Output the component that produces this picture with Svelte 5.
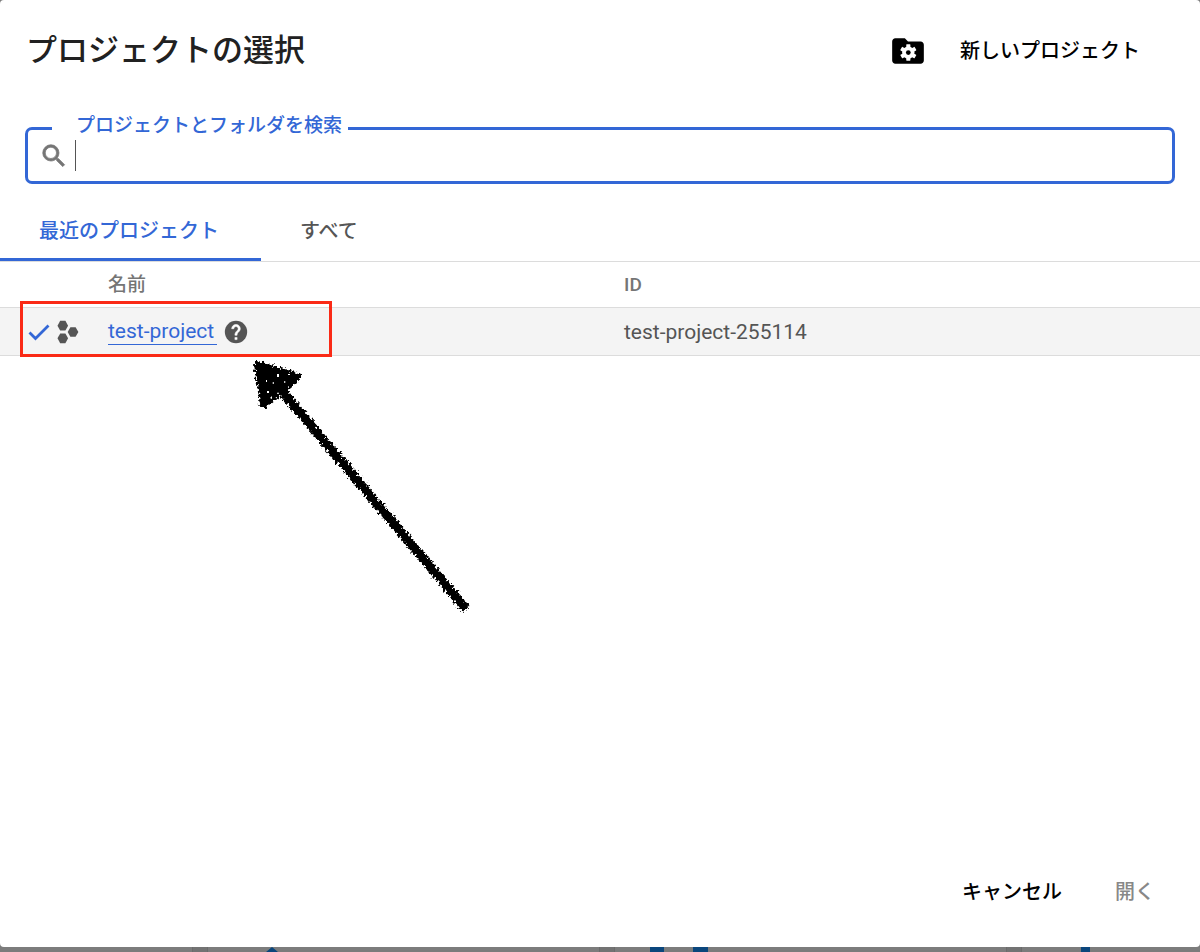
<script lang="ts">
  interface Project {
    name: string;
    id: string;
  }

  const tabs = [
    { key: 'recent', label: '最近のプロジェクト' },
    { key: 'all', label: 'すべて' }
  ];

  const projects: Project[] = [{ name: 'test-project', id: 'test-project-255114' }];

  let activeTab = $state('recent');
  let query = $state('');
  let selectedId = $state('test-project-255114');

  const visible = $derived(projects.filter((p) => p.name.includes(query)));
</script>

<div class="page">
  <div class="dialog" role="dialog" aria-labelledby="dialog-title">
    <header class="header">
      <h1 id="dialog-title">プロジェクトの選択</h1>
      <button type="button" class="new-project">
        <svg width="38" height="38" viewBox="0 0 24 24" aria-hidden="true">
          <path
            fill="#000"
            d="M10 4H4C2.900 4 2 4.900 2 6v12c0 1.100.9 2 2 2h16c1.100 0 2-.9 2-2V8c0-1.100-.9-2-2-2h-8z"
          />
          <g transform="translate(12.2 13)" fill="#fff">
            <circle r="3.900" />
            {#each [0, 60, 120] as angle}
              <rect x="-1.300" y="-5.200" width="2.600" height="10.400" rx=".3" transform="rotate({angle})" />
            {/each}
            <circle r="1.500" fill="#000" />
          </g>
        </svg>
        <span>新しいプロジェクト</span>
      </button>
    </header>

    <!-- Search -->
    <fieldset class="search">
      <legend><label for="search">プロジェクトとフォルダを検索</label></legend>
      <div class="search-row">
        <svg width="30" height="30" viewBox="0 0 24 24" aria-hidden="true">
          <path
            fill="#757575"
            stroke="#757575"
            stroke-width=".6"
            d="M15.500 14h-.79l-.28-.27A6.471 6.471 0 0 0 16 9.500 6.500 6.500 0 1 0 9.500 16c1.610 0 3.090-.59 4.230-1.570l.27.28v.79l5 4.990L20.490 19l-4.990-5zm-6 0C7.010 14 5 11.990 5 9.500S7.010 5 9.500 5 14 7.010 14 9.500 11.990 14 9.500 14z"
          />
        </svg>
        <span class="caret"></span>
        <input id="search" type="text" bind:value={query} />
      </div>
    </fieldset>

    <!-- Tabs -->
    <div class="tabs" role="tablist">
      {#each tabs as tab}
        <button
          type="button"
          role="tab"
          class="tab"
          class:active={activeTab === tab.key}
          aria-selected={activeTab === tab.key}
          onclick={() => (activeTab = tab.key)}
        >
          {tab.label}
        </button>
      {/each}
    </div>

    <div class="list">
      <table>
        <thead>
          <tr>
            <th class="col-icon"></th>
            <th class="col-name">名前</th>
            <th>ID</th>
          </tr>
        </thead>
        <tbody>
          {#each visible as project}
            <tr class:selected={project.id === selectedId}>
              <td class="col-icon">
                <div class="icons">
                  <svg width="22" height="18" viewBox="0 0 22 18" aria-hidden="true">
                    <path d="M1.500 9.500 7.500 15.500 20.500 2.500" fill="none" stroke="#3367d6" stroke-width="2.800" />
                  </svg>
                  <svg width="22" height="24" viewBox="0 0 22 24" fill="#555" aria-hidden="true">
                    <path d="M3.200.8h5.200L11.100 5.800 8.400 10.500H3.200L.5 5.800z" />
                    <path d="M13.400 7.300h5.200L21.400 12l-2.800 4.700h-5.200L10.700 12z" />
                    <path d="M3.200 13.500h5.200l2.700 4.700-2.700 5H3.200l-2.700-5z" />
                  </svg>
                </div>
              </td>
              <td class="col-name">
                <div class="name">
                  <a href="#{project.id}" onclick={() => (selectedId = project.id)}>{project.name}</a>
                  <svg width="26" height="26" viewBox="0 0 24 24" aria-hidden="true">
                    <circle cx="12" cy="12" r="10.300" fill="#555" />
                    <path
                      fill="#fff"
                      stroke="#fff"
                      stroke-width=".5"
                      d="M13 19h-2v-2h2v2zm2.070-7.750-.9.920C13.450 12.900 13 13.500 13 15h-2v-.5c0-1.100.45-2.100 1.170-2.830l1.240-1.260c.37-.36.59-.86.59-1.410 0-1.100-.9-2-2-2s-2 .9-2 2H8c0-2.210 1.790-4 4-4s4 1.790 4 4c0 .88-.36 1.680-.93 2.250z"
                    />
                  </svg>
                </div>
              </td>
              <td>{project.id}</td>
            </tr>
          {/each}
        </tbody>
      </table>

      <!-- Callout drawn over the selected row -->
      <div class="callout"></div>
      <svg class="arrow" width="240" height="270" viewBox="0 0 240 270" aria-hidden="true">
        <defs>
          <filter id="rough" filterUnits="userSpaceOnUse" x="0" y="0" width="240" height="270">
            <feTurbulence type="fractalNoise" baseFrequency=".4" numOctaves="2" seed="4" result="noise" />
            <feDisplacementMap in="SourceGraphic" in2="noise" scale="8" xChannelSelector="R" yChannelSelector="G" />
          </filter>
        </defs>
        <g filter="url(#rough)" stroke="#000" stroke-linejoin="round">
          <path d="M18 15 57 27 24 54z" stroke-width="8" />
          <path d="M36 34 226 259" fill="none" stroke-width="9" />
        </g>
        <path
          fill="#fff"
          d="M37 24h2v3h-2zM32 33l2-1v2zM44 31l2 1-2 1zM27 41h2v2h-2zM48 24h2v1h-2zM30 48l2-2v3zM38 42l1 2h-2zM26 30h1v2h-1z"
        />
      </svg>
    </div>

    <footer class="actions">
      <button type="button">キャンセル</button>
      <button type="button" disabled>開く</button>
    </footer>
  </div>

  <!-- Dimmed dashboard cards behind the dialog -->
  <svg class="backdrop" viewBox="0 0 1200 5" preserveAspectRatio="none" aria-hidden="true">
    <path fill="#7c7c7c" d="M0 0h1200v5H0z" />
    <path fill="#737373" d="M192 0h16v5h-16zM599 0h16v5h-16zM1006 0h16v5h-16z" />
    <path fill="#6b6b6b" d="M192 0h1v5h-1zM207 0h1v5h-1zM599 0h1v5h-1zM614 0h1v5h-1zM1006 0h1v5h-1zM1021 0h1v5h-1z" />
    <path fill="#0b467c" d="M272 0l6 5h-12zM650 0h14v5h-14zM693 0h15v5h-15zM1081 0h9v5h-9z" />
  </svg>
</div>

<style>
  :global(body) {
    margin: 0;
    background: #7c7c7c;
  }

  .page {
    display: flex;
    flex-direction: column;
    min-height: 100vh;
    font-family: Roboto, 'Noto Sans CJK JP', sans-serif;
    font-size: 21px;
    color: #555;
  }

  .dialog {
    flex: 1;
    display: flex;
    flex-direction: column;
    background: #fff;
    border-radius: 4px;
  }

  .backdrop {
    display: block;
    width: 100%;
    height: 5px;
  }

  button {
    padding: 0;
    border: 0;
    background: none;
    font-family: inherit;
    font-size: 20px;
    font-weight: 500;
    line-height: 32px;
    color: #000;
    cursor: pointer;
  }

  .header {
    display: flex;
    align-items: center;
    justify-content: space-between;
    height: 102px;
    margin-bottom: 12px;
    padding: 0 60px 0 26px;
  }

  h1 {
    margin: 0;
    font-size: 31px;
    font-weight: 500;
    line-height: 40px;
    color: #212121;
  }

  .new-project {
    display: flex;
    align-items: center;
    gap: 33px;
  }

  .search {
    margin: 0 25px;
    padding: 0;
    min-width: 0;
    border: 3px solid #3367d6;
    border-radius: 7px;
  }

  .search legend {
    margin-left: 24px;
    padding: 2px 6px 6px 24px;
    font-size: 19px;
    font-weight: 500;
    line-height: 20px;
    color: #3367d6;
  }

  .search-row {
    display: flex;
    align-items: center;
    height: 51px;
    margin-top: -12px;
    padding-left: 11px;
  }

  .caret {
    width: 1px;
    height: 31px;
    margin-left: 6px;
    background: #555;
  }

  .search-row input {
    flex: 1;
    min-width: 0;
    height: 40px;
    padding: 0;
    border: 0;
    outline: 0;
    background: none;
    font: inherit;
    color: #212121;
  }

  .tabs {
    display: flex;
    height: 60px;
    margin-top: 17px;
    border-bottom: 1px solid #dcdcdc;
  }

  .tab {
    padding: 3px 42px 0 39px;
    border-bottom: 3px solid transparent;
    color: #555;
  }

  .tab.active {
    border-bottom-color: #3367d6;
    color: #3367d6;
  }

  .list {
    position: relative;
    flex: 1;
  }

  table {
    width: 100%;
    table-layout: fixed;
    border-collapse: collapse;
  }

  th,
  td {
    padding: 0;
    border-bottom: 1px solid #dcdcdc;
    text-align: left;
  }

  th {
    height: 45px;
    font-size: 19px;
    font-weight: 500;
    line-height: 24px;
    color: #757575;
  }

  td {
    height: 47px;
  }

  .selected {
    background: #f4f4f4;
  }

  .col-icon {
    width: 9%;
  }

  .col-name {
    width: 43%;
  }

  .icons {
    display: flex;
    align-items: center;
    gap: 7px;
    padding-left: 28px;
  }

  .name {
    display: flex;
    align-items: center;
    gap: 6px;
  }

  .name a {
    padding-right: 3px;
    border-bottom: 1px solid #3367d6;
    line-height: 26px;
    color: #3367d6;
    text-decoration: none;
  }

  .callout {
    position: absolute;
    top: 39px;
    left: 20px;
    width: 306px;
    height: 50px;
    border: 3px solid #fa2a16;
  }

  .arrow {
    position: absolute;
    top: 88px;
    left: 240px;
    pointer-events: none;
  }

  .actions {
    display: flex;
    justify-content: flex-end;
    gap: 53px;
    padding: 0 45px 39px;
  }

  .actions button:disabled {
    color: #888;
    cursor: default;
  }
</style>
